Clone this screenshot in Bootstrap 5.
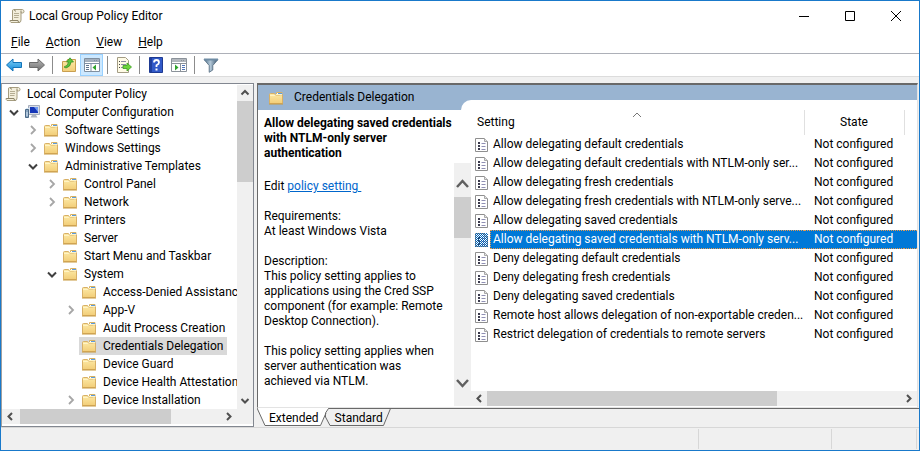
<!DOCTYPE html>
<html lang="en">
<head>
<meta charset="utf-8">
<meta name="viewport" content="width=device-width, initial-scale=1">
<title>Local Group Policy Editor</title>
<link href="https://cdn.jsdelivr.net/npm/bootstrap@5.3.0/dist/css/bootstrap.min.css" rel="stylesheet">
<style>
  body { font: 12px/15px Roboto, "Open Sans", sans-serif; color: #000; }
  button { font: inherit; color: inherit; background: none; border: 0; padding: 0; }
  svg { display: block; flex: none; }
  .app-window { border: 1px solid #1979ca; }
  .title-bar { height: 30px; padding-left: 8px; }
  .caption-btn { width: 46px; height: 30px; }
  .menu-bar { height: 22px; padding-left: 10px; gap: 16px; }
  .tool-bar { height: 24px; border-top: 1px solid #adb0b8; border-bottom: 1px solid #dcdcdc; padding-left: 5px; }
  .tool-btn { width: 23px; height: 22px; }
  .tool-btn.pressed { background: #cce8ff; border: 1px solid #99d1ff; }
  .tool-sep { width: 1px; height: 18px; background: #8c8c8c; margin: 0 4px; }
  .work-area { background: #f0f0f0; padding-top: 6px; min-height: 0; }
  .tree-pane { flex: 0 0 253px; border: 1px solid #828790; border-left-color: #a0a0a0; padding: 1px 0 2px 0; }
  .tree-row { height: 18px; gap: 2px; white-space: nowrap; }
  .lv0 { padding-left: 1px; } .lv1 { padding-left: 6px; } .lv2 { padding-left: 25px; } .lv3 { padding-left: 44px; } .lv4 { padding-left: 63px; }
  .twisty { width: 12px; height: 18px; flex: none; }
  .tree-label { gap: 6px; height: 18px; padding: 0 4px 0 2px; }
  .tree-label.current { background: #d9d9d9; }
  .scroll-track { background: #f0f0f0; }
  .scroll-thumb { background: #cdcdcd; }
  .vbar { width: 16px; flex: none; }
  .hbar { height: 15px; flex: none; }
  .tip { width: 16px; height: 16px; flex: none; }
  .split-gap { flex: 0 0 3px; }
  .result-frame { border-top: 2px solid #696969; border-left: 1px solid #696969; border-right: 1px solid #e3e3e3; border-bottom: 1px solid #e3e3e3; margin-right: 1px; padding-bottom: 1px; }
  .pane-head { background: #99b4d1; height: 25px; }
  .pane-title { flex: 0 0 203px; padding-left: 10px; gap: 10px; }
  .pane-curve { height: 10px; border-top-left-radius: 10px; background: #fff; }
  .detail-pane { flex: 0 0 213px; }
  .detail-text { padding: 6px 0 0 6px; white-space: nowrap; }
  .detail-text p { margin: 0 0 15px; }
  .detail-text .edit-line { margin-top: 18px; }
  .detail-text a { color: #0066cc; }
  .detail-bar { width: 17px; margin-top: 53px; flex: none; }
  .setting-table { table-layout: fixed; width: 100%; margin: 0; }
  .setting-table th { height: 25px; font-weight: 400; padding: 0 6px; border-right: 1px solid #e0e0e0; }
  .setting-table td { height: 19px; padding: 0; }
  .cell-name { gap: 1px; padding-left: 4px; }
  .cell-text { height: 19px; line-height: 19px; padding: 0 3px; min-width: 0; }
  .cell-state { height: 19px; line-height: 19px; padding-left: 10px; white-space: nowrap; }
  .picked .cell-text, .picked .cell-state, .picked .row-tail { background: #0078d7; color: #fff; border-top: 1px dotted #e59a50; border-bottom: 1px dotted #e59a50; line-height: 17px; }
  .picked .cell-text { border-left: 1px dotted #e59a50; padding-left: 2px; }
  .row-tail { height: 19px; }
  .tab-strip { height: 19px; border-top: 1px solid #696969; }
  .tab-shape { left: -1px; top: -1px; }
  .tab-strip button { height: 18px; }
  .tab-ext { padding-left: 12px; } .tab-std { padding-left: 16px; }
  .status-bar { height: 23px; background: #f0f0f0; border-top: 1px solid #d7d7d7; padding: 1px 2px 1px 0; }
  .status-cell { border-right: 1px solid #d7d7d7; }
  .w-a { flex: 0 0 133px; } .w-b { flex: 0 0 85px; }
</style>
<script src="https://cdn.jsdelivr.net/npm/bootstrap@5.3.0/dist/js/bootstrap.bundle.min.js"></script>
</head>
<body>
<svg width="0" height="0" class="position-absolute" aria-hidden="true">
  <defs>
    <linearGradient id="gFold" x1="0" y1="0" x2="0" y2="1"><stop offset="0" stop-color="#fdeaa6"/><stop offset="1" stop-color="#f2cd78"/></linearGradient>
    <linearGradient id="gBlue" x1="0" y1="0" x2="0" y2="1"><stop offset="0" stop-color="#7fd0f6"/><stop offset="1" stop-color="#1088d8"/></linearGradient>
    <linearGradient id="gGray" x1="0" y1="0" x2="0" y2="1"><stop offset="0" stop-color="#b8b8b8"/><stop offset="1" stop-color="#6e6e6e"/></linearGradient>
    <linearGradient id="gFun" x1="0" y1="0" x2="1" y2="0"><stop offset="0" stop-color="#4d6d87"/><stop offset=".45" stop-color="#b3c8d8"/><stop offset="1" stop-color="#34506a"/></linearGradient>
    <pattern id="pDot" width="2" height="2" patternUnits="userSpaceOnUse"><path d="M0 0h1v1H0zM1 1h1v1H1z" fill="#0063b8"/></pattern>
    <symbol id="folder" viewBox="0 0 16 16"><path d="M1.500 13.500V4.500q0-1 1-1h4l1 1.500h7v8.500z" fill="url(#gFold)" stroke="#d8b066"/><path d="M8.500 4.500v-2h5.500v3" fill="#fff" stroke="#d9b262"/><path d="M10 3h4v1h-4z" fill="#5a9be0"/><path d="M2 5.500h5l1-1h6" stroke="#fff3c4" fill="none"/><path d="M1 14h14" stroke="#c8993f"/></symbol>
    <symbol id="scroll" viewBox="0 0 16 16"><path d="M4.500 1.500h9q1.500.5 1.500 2t-1.500 1.500h-1.500v7q0 2.500-2 2.500h-8q-1-.5-1-2h2.500V3q0-1.500 1-1.500z" fill="#f3eedb" stroke="#a59c7e"/><path d="M12 5V2.500M1.500 12.500h7.500q0 2 1.500 2M5 2q1.500 0 1.500 1.500" stroke="#8d8468" fill="none"/><path d="M5 5.500h5M5 7.500h5M5 9.500h4.500" stroke="#b5ad93"/></symbol>
    <symbol id="computer" viewBox="0 0 16 16"><path d="M4.500 1.500h11v9h-11z" fill="#d9dde6" stroke="#a5adbd"/><path d="M6 3h8v6H6z" fill="#1636b8"/><path d="M10 3h4v5z" fill="#6f9af0"/><path d="M8 11h4l1.500 2.500h-7z" fill="#aeb4c0"/><path d="M1.500 5.500h3v8h-3z" fill="#8aa5c0" stroke="#4c6a88"/><path d="M2 4.500h4M3 8v4" stroke="#d7e8f6"/></symbol>
    <symbol id="sheet" viewBox="0 0 14 16"><path d="M.5 1.500h9l3 3v10H.5z" fill="#fff" stroke="#8f8f8f"/><path d="M9.500 1.500v3h3" fill="#e4e4e4" stroke="#a8a8a8"/><path d="M3 5h2v2H3zM3 8h2v2H3zM3 11h2v2H3z" fill="#3a3a4c"/><path d="M6.500 6.500h4M6.500 9.500h4M6.500 12.500h4" stroke="#9090b4"/></symbol>
    <symbol id="down" viewBox="0 0 12 12"><path d="M2 4.500l4 4 4-4" fill="none" stroke="#404040" stroke-width="2"/></symbol>
    <symbol id="right" viewBox="0 0 12 12"><path d="M4 2l4 4-4 4" fill="none" stroke="#a6a6a6" stroke-width="1.800"/></symbol>
    <symbol id="sUp" viewBox="0 0 16 16"><path d="M4.500 9.500L8 6l3.500 3.500" fill="none" stroke="#505050" stroke-width="2"/></symbol>
    <symbol id="sDown" viewBox="0 0 16 16"><path d="M4.500 6L8 9.500 11.500 6" fill="none" stroke="#505050" stroke-width="2"/></symbol>
    <symbol id="sLeft" viewBox="0 0 16 16"><path d="M10 4L6.500 7.500 10 11" fill="none" stroke="#505050" stroke-width="2"/></symbol>
    <symbol id="sRight" viewBox="0 0 16 16"><path d="M6 4l3.500 3.500L6 11" fill="none" stroke="#505050" stroke-width="2"/></symbol>
  </defs>
</svg>

<div class="app-window vh-100 d-flex flex-column bg-white overflow-hidden">
  <header class="title-bar d-flex align-items-center flex-shrink-0">
    <svg width="16" height="16"><use href="#scroll"/></svg>
    <span class="ms-1 flex-grow-1">Local Group Policy Editor</span>
    <button class="caption-btn d-flex align-items-center justify-content-center" aria-label="Minimize"><svg width="10" height="10"><path d="M0 5.500h10" stroke="#000"/></svg></button>
    <button class="caption-btn d-flex align-items-center justify-content-center" aria-label="Maximize"><svg width="10" height="10"><path d="M.5.5h9v9h-9z" stroke="#000" fill="none"/></svg></button>
    <button class="caption-btn d-flex align-items-center justify-content-center" aria-label="Close"><svg width="10" height="10"><path d="M0 0l10 10M10 0L0 10" stroke="#000"/></svg></button>
  </header>

  <nav class="menu-bar d-flex align-items-center flex-shrink-0" aria-label="Menu">
    <button><u>F</u>ile</button><button><u>A</u>ction</button><button><u>V</u>iew</button><button><u>H</u>elp</button>
  </nav>

  <div class="tool-bar d-flex align-items-center flex-shrink-0" role="toolbar">
    <button class="tool-btn" aria-label="Back"><svg width="16" height="16"><path d="M.5 8l6.500-6v3.500h8.500v5H7V14z" fill="url(#gBlue)" stroke="#1273b8"/></svg></button>
    <button class="tool-btn" aria-label="Forward"><svg width="16" height="16"><path d="M15.500 8L9 2v3.500H.5v5H9V14z" fill="url(#gGray)" stroke="#6b6b6b"/></svg></button>
    <span class="tool-sep ms-0"></span>
    <button class="tool-btn d-flex justify-content-center align-items-center" aria-label="Up one level"><svg width="16" height="16"><path d="M1.500 14.500v-10h4l1-2h8v12z" fill="url(#gFold)" stroke="#c99f50"/><path d="M3 10q4-1 4.500-5H5.500L9 .8 12.500 5h-2.300q-.7 5-5.200 6z" fill="#5cc43c" stroke="#2f8a22" stroke-width=".7"/></svg></button>
    <button class="tool-btn pressed d-flex justify-content-center align-items-center" aria-label="Show or hide console tree"><svg width="16" height="14"><path d="M.5.5h15v13H.5z" fill="#fff" stroke="#7f8fa0"/><path d="M1 1h14v3H1z" fill="#a4b0be"/><path d="M10 2.500h1M12 2.500h1M1 5.500h14M7 6v8" stroke="#8090a4"/><path d="M2 7.500h3M2 9.500h3M2 11.500h3" stroke="#60748e"/><path d="M12 6.500v6L8.500 9.500z" fill="#2fa32c"/></svg></button>
    <span class="tool-sep ms-1 me-1"></span>
    <button class="tool-btn d-flex justify-content-center align-items-center" aria-label="Export list"><svg width="16" height="16"><path d="M1.500.5h8l3 3v12h-11z" fill="#fffbe6" stroke="#a39c84"/><path d="M3 4.500h1M3 7.500h1M3 10.500h1" stroke="#444"/><path d="M5 4.500h5M5 7.500h5M5 10.500h2" stroke="#8e8ea0"/><path d="M7 8.500h4V6l4.500 4-4.500 4v-2.500H7z" fill="#6ed53b" stroke="#3a9d20" stroke-width=".8"/></svg></button>
    <span class="tool-sep ms-1 me-1"></span>
    <button class="tool-btn d-flex justify-content-center align-items-center" aria-label="Help"><svg width="14" height="16"><path d="M.5.5h13v15H.5z" fill="#3159c8" stroke="#1e3a92"/><path d="M1 1h2v14H1z" fill="#1f3f9e"/><path d="M5 5.500Q5 3 7.500 3T10 5.500Q10 7 7.500 8.200V10" fill="none" stroke="#fff" stroke-width="1.800"/><path d="M6.500 11.500h2v2h-2z" fill="#fff"/></svg></button>
    <button class="tool-btn d-flex justify-content-center align-items-center" aria-label="Show or hide action pane"><svg width="16" height="14"><path d="M.5.5h15v13H.5z" fill="#fff" stroke="#8b929a"/><path d="M1 1h14v3H1z" fill="#b3b8be"/><path d="M10 2.500h1M12 2.500h1M1 5.500h14M9.500 6v8" stroke="#8b929a"/><path d="M11 7.500h3M11 9.500h3M11 11.500h3" stroke="#5075b8"/><path d="M4 6.500v6l3.500-3z" fill="#2fa32c"/></svg></button>
    <span class="tool-sep ms-1 me-1"></span>
    <button class="tool-btn d-flex justify-content-center align-items-center" aria-label="Filter"><svg width="16" height="16"><path d="M1 2.500h14L9.800 8.500V13l-3.600 2.300V8.500z" fill="url(#gFun)" stroke="#50687c" stroke-width=".8"/><path d="M1 2.500h14" stroke="#6f8ca4" stroke-width="2"/></svg></button>
  </div>

  <main class="work-area d-flex flex-grow-1">
    <section class="tree-pane d-flex flex-column bg-white overflow-hidden">
      <div class="d-flex flex-grow-1 overflow-hidden">
        <ul class="list-unstyled m-0 flex-grow-1 overflow-hidden" role="tree" id="tree"></ul>
        <div class="vbar scroll-track d-flex flex-column">
          <svg class="tip" width="16" height="16"><use href="#sUp"/></svg>
          <div class="scroll-thumb h-25"></div>
          <svg class="tip mt-auto" width="16" height="16"><use href="#sDown"/></svg>
        </div>
      </div>
      <div class="hbar scroll-track d-flex">
        <svg class="tip" width="16" height="16"><use href="#sLeft"/></svg>
        <div class="scroll-thumb" style="width:60%;margin-left:2px"></div>
        <svg class="tip ms-auto me-3" width="16" height="16"><use href="#sRight"/></svg>
      </div>
    </section>
    <div class="split-gap"></div>

    <section class="d-flex flex-column flex-grow-1 overflow-hidden">
      <div class="result-frame d-flex flex-column flex-grow-1 bg-white overflow-hidden">
        <div class="pane-head d-flex flex-shrink-0">
          <div class="pane-title d-flex align-items-center"><svg width="16" height="16"><use href="#folder"/></svg><span>Credentials Delegation</span></div>
          <div class="pane-curve flex-grow-1 align-self-end"></div>
        </div>
        <div class="d-flex flex-grow-1 overflow-hidden">
          <div class="detail-pane d-flex">
            <div class="detail-text flex-grow-1" style="width:0">
              <p class="fw-bold">Allow delegating saved credentials<br>with NTLM-only server<br>authentication</p>
              <p class="edit-line">Edit <a href="#">policy setting&nbsp;</a></p>
              <p>Requirements:<br>At least Windows Vista</p>
              <p>Description:<br>This policy setting applies to<br>applications using the Cred SSP<br>component (for example: Remote<br>Desktop Connection).</p>
              <p>This policy setting applies when<br>server authentication was<br>achieved via NTLM.</p>
            </div>
            <div class="detail-bar scroll-track d-flex flex-column">
              <svg class="mt-2" width="17" height="26"><path d="M3 16l5.500-6 5.500 6" fill="none" stroke="#606060" stroke-width="2.500"/></svg>
              <div class="scroll-thumb" style="height:17%"></div>
              <svg class="mt-auto mb-3" width="17" height="14"><path d="M3 4l5.500 6 5.500-6" fill="none" stroke="#606060" stroke-width="2.500"/></svg>
            </div>
          </div>
          <div class="d-flex flex-column flex-grow-1 overflow-hidden">
            <table class="setting-table">
              <colgroup><col><col style="width:100px"><col style="width:13px"></colgroup>
              <thead><tr><th>
                <div class="position-relative">Setting<svg class="position-absolute start-50 top-0 translate-middle" width="9" height="5"><path d="M.5 4.500l4-4 4 4" fill="none" stroke="#777"/></svg></div>
              </th><th class="text-center">State</th><th class="border-0"></th></tr></thead>
              <tbody id="rows"></tbody>
            </table>
            <div class="hbar scroll-track d-flex mt-auto">
              <svg class="tip" width="16" height="16"><use href="#sLeft"/></svg>
              <div class="scroll-thumb" style="width:65%"></div>
              <svg class="tip ms-auto" width="16" height="16"><use href="#sRight"/></svg>
            </div>
          </div>
        </div>
      </div>
      <div class="tab-strip position-relative d-flex flex-shrink-0" role="tablist">
        <svg class="tab-shape position-absolute" width="140" height="19"><path d="M1 0l8 17.500h56L72.500 0z" fill="#fff"/><path d="M1 0l8 17.500h55.500L70 5M69.500 5L72.500.5M69.500 5v4l4.500 8.500h53.500l7-17" fill="none" stroke="#696969"/></svg>
        <button class="tab-ext position-relative" role="tab" aria-selected="true">Extended</button>
        <button class="tab-std position-relative" role="tab" aria-selected="false">Standard</button>
      </div>
    </section>
  </main>

  <footer class="status-bar d-flex flex-shrink-0">
    <div class="status-cell flex-grow-1"></div><div class="status-cell w-a"></div><div class="status-cell w-b"></div>
  </footer>
</div>

<script>
  // [level, arrow, icon, label, current]
  const nodes = [
    [0, "", "scroll", "Local Computer Policy"],
    [1, "down", "computer", "Computer Configuration"],
    [2, "right", "folder", "Software Settings"],
    [2, "right", "folder", "Windows Settings"],
    [2, "down", "folder", "Administrative Templates"],
    [3, "right", "folder", "Control Panel"],
    [3, "right", "folder", "Network"],
    [3, "", "folder", "Printers"],
    [3, "", "folder", "Server"],
    [3, "", "folder", "Start Menu and Taskbar"],
    [3, "down", "folder", "System"],
    [4, "", "folder", "Access-Denied Assistance"],
    [4, "right", "folder", "App-V"],
    [4, "", "folder", "Audit Process Creation"],
    [4, "", "folder", "Credentials Delegation", true],
    [4, "", "folder", "Device Guard"],
    [4, "", "folder", "Device Health Attestation"],
    [4, "right", "folder", "Device Installation"]
  ];
  document.getElementById("tree").innerHTML = nodes.map(([lv, arrow, icon, label, cur]) => {
    const twisty = lv === 0 ? "" : arrow
      ? `<button class="twisty d-flex align-items-center" aria-label="Toggle ${label}"><svg width="12" height="12"><use href="#${arrow}"/></svg></button>`
      : `<span class="twisty"></span>`;
    return `<li class="tree-row d-flex lv${lv}" role="treeitem">${twisty}<button class="tree-label d-flex align-items-center${cur ? " current" : ""}"><svg width="16" height="16"><use href="#${icon}"/></svg>${label}</button></li>`;
  }).join("");

  const settings = [
    "Allow delegating default credentials",
    "Allow delegating default credentials with NTLM-only ser...",
    "Allow delegating fresh credentials",
    "Allow delegating fresh credentials with NTLM-only serve...",
    "Allow delegating saved credentials",
    "Allow delegating saved credentials with NTLM-only serv...",
    "Deny delegating default credentials",
    "Deny delegating fresh credentials",
    "Deny delegating saved credentials",
    "Remote host allows delegation of non-exportable creden...",
    "Restrict delegation of credentials to remote servers"
  ];
  document.getElementById("rows").innerHTML = settings.map((s, i) => {
    const on = i === 5;
    const shade = on ? '<rect x="0" y="1" width="13" height="14" fill="url(#pDot)"/>' : "";
    return `<tr class="${on ? "picked" : ""}"><td><div class="cell-name d-flex align-items-center"><svg width="14" height="16"><use href="#sheet" width="14" height="16"/>${shade}</svg><div class="cell-text flex-grow-1 text-nowrap overflow-hidden">${s}</div></div></td><td><div class="cell-state">Not configured</div></td><td><div class="row-tail"></div></td></tr>`;
  }).join("");
</script>
</body>
</html>
